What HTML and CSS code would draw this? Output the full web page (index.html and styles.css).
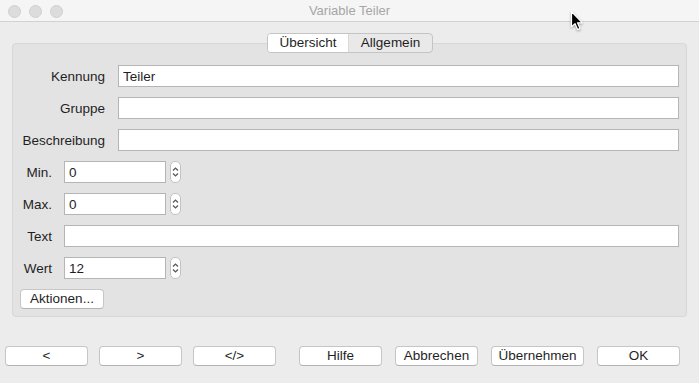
FILE: index.html
```html
<!DOCTYPE html>
<html lang="de">
<head>
    <meta charset="UTF-8">
    <title>Variable Teiler</title>
    <link rel="stylesheet" href="styles.css">
</head>
<body>

<div class="window">

    <div class="titlebar">
        <div class="lights">
            <span class="light"></span>
            <span class="light"></span>
            <span class="light"></span>
        </div>
        <span class="title">Variable Teiler</span>
    </div>

    <div class="content">
        <div class="tabs">
            <span class="tab active">Übersicht</span>
            <span class="tab">Allgemein</span>
        </div>

        <div class="group">
            <div class="row wide">
                <label class="label">Kennung</label>
                <input type="text" class="field" value="Teiler">
            </div>
            <div class="row wide">
                <label class="label">Gruppe</label>
                <input type="text" class="field">
            </div>
            <div class="row wide">
                <label class="label">Beschreibung</label>
                <input type="text" class="field">
            </div>

            <div class="row narrow">
                <label class="label">Min.</label>
                <input type="text" class="field small" value="0">
                <span class="stepper"><svg width="7" height="12" viewBox="0 0 7 12"><path d="M1 4.5 L3.5 2 L6 4.5 M1 7.5 L3.5 10 L6 7.5" fill="none" stroke="#555" stroke-width="1.2"/></svg></span>
            </div>
            <div class="row narrow">
                <label class="label">Max.</label>
                <input type="text" class="field small" value="0">
                <span class="stepper"><svg width="7" height="12" viewBox="0 0 7 12"><path d="M1 4.5 L3.5 2 L6 4.5 M1 7.5 L3.5 10 L6 7.5" fill="none" stroke="#555" stroke-width="1.2"/></svg></span>
            </div>
            <div class="row narrow">
                <label class="label">Text</label>
                <input type="text" class="field">
            </div>
            <div class="row narrow">
                <label class="label">Wert</label>
                <input type="text" class="field small" value="12">
                <span class="stepper"><svg width="7" height="12" viewBox="0 0 7 12"><path d="M1 4.5 L3.5 2 L6 4.5 M1 7.5 L3.5 10 L6 7.5" fill="none" stroke="#555" stroke-width="1.2"/></svg></span>
            </div>

            <button class="btn actions">Aktionen...</button>
        </div>
    </div>

    <div class="footer">
        <div class="btn-group">
            <button class="btn">&lt;</button>
            <button class="btn">&gt;</button>
            <button class="btn">&lt;/&gt;</button>
        </div>
        <div class="btn-group right">
            <button class="btn">Hilfe</button>
            <button class="btn">Abbrechen</button>
            <button class="btn wide-btn">Übernehmen</button>
            <button class="btn">OK</button>
        </div>
    </div>

    <svg class="cursor" width="14" height="22" viewBox="0 0 14 22">
        <path d="M1.5 1.5 L1.5 17 L5 13.6 L7.6 19.6 L10 18.6 L7.5 12.8 L12.3 12.8 Z" fill="#000" stroke="#fff" stroke-width="1.2" stroke-linejoin="round"/>
    </svg>

</div>

</body>
</html>
```

FILE: styles.css
```css
body {
    margin: 0;
    font-family: "Liberation Sans", Arial, sans-serif;
    font-size: 13.5px;
    color: #1f1f1f;
    background-color: #ececec;
}

.window {
    position: relative;
    width: 699px;
    height: 383px;
    background-color: #ececec;
    overflow: hidden;
}

.titlebar {
    height: 21px;
    border-bottom: 1px solid #d2d2d2;
    background-color: #f5f5f5;
    display: flex;
    align-items: center;
    justify-content: center;
    position: relative;
}

.lights {
    position: absolute;
    left: 8px;
    top: 5px;
    display: flex;
    gap: 8px;
}

.light {
    width: 11px;
    height: 11px;
    border-radius: 50%;
    background-color: #dcdcdc;
    border: 1px solid #d0d0d0;
}

.title {
    font-size: 13px;
    color: #a6a6a6;
}

.content {
    padding: 11px 12px 0 12px;
}

.tabs {
    position: relative;
    z-index: 1;
    display: flex;
    width: 164px;
    height: 18px;
    margin: 0 auto 0 255px;
    border: 1px solid #c4c4c4;
    border-radius: 4px;
    background-color: #e9e9e9;
    overflow: hidden;
}

.tab {
    display: flex;
    align-items: center;
    justify-content: center;
    flex: 1;
    line-height: 18px;
}

.tab.active {
    flex: 0 0 80px;
    background-color: #fff;
    border-right: 1px solid #d8d8d8;
}

.group {
    margin-top: -10px;
    height: 274px;
    box-sizing: border-box;
    padding: 21px 7px 0 0;
    background-color: #e3e3e3;
    border: 1px solid #d7d7d7;
    border-radius: 4px;
    display: flex;
    flex-direction: column;
    gap: 10px;
}

.row {
    display: flex;
    align-items: center;
    height: 22px;
}

.row .label {
    text-align: right;
    white-space: nowrap;
}

.row.wide .label {
    width: 92px;
    margin-right: 13px;
}

.row.narrow .label {
    width: 39px;
    margin-right: 12px;
}

.field {
    flex: 1;
    min-width: 0;
    height: 22px;
    box-sizing: border-box;
    border: 1px solid #b5b5b5;
    background-color: #fff;
    padding: 0 4px;
    font-family: inherit;
    font-size: 13.5px;
    color: #1f1f1f;
    outline: none;
}

.field.small {
    flex: 0 0 102px;
    width: 102px;
}

.stepper {
    width: 11px;
    height: 22px;
    box-sizing: border-box;
    margin-left: 4px;
    border: 1px solid #c2c2c2;
    border-radius: 5px;
    background-color: #fff;
    display: flex;
    align-items: center;
    justify-content: center;
}

.btn {
    height: 20px;
    box-sizing: border-box;
    padding: 0;
    border: 1px solid #c6c6c6;
    border-bottom-color: #b3b3b3;
    border-radius: 4px;
    background-color: #fff;
    font-family: inherit;
    font-size: 13.5px;
    color: #1f1f1f;
    line-height: 18px;
}

.btn.actions {
    align-self: flex-start;
    width: 84px;
    height: 20px;
    margin-left: 7px;
}

.footer {
    display: flex;
    padding: 29px 0 0 5px;
}

.btn-group {
    display: flex;
    gap: 11px;
}

.btn-group .btn {
    width: 83px;
}

.btn-group.right {
    margin-left: 23px;
    gap: 13px;
}

.btn-group .btn.wide-btn {
    width: 93px;
}

.cursor {
    position: absolute;
    left: 570px;
    top: 10px;
    filter: drop-shadow(0 1px 1px rgba(0, 0, 0, .35));
}
```
